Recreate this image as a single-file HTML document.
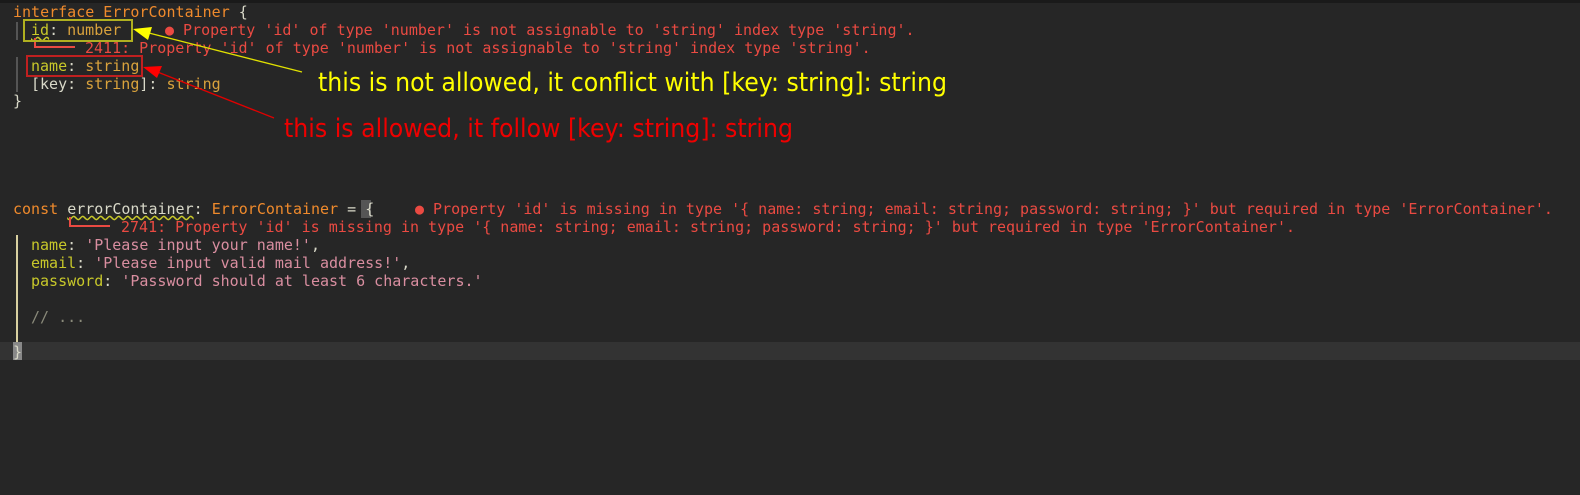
<!DOCTYPE html>
<html><head><style>
body{margin:0;width:1580px;height:495px;background:#262626;overflow:hidden;position:relative;font-family:"DejaVu Sans Mono","Liberation Mono",monospace;font-size:15px}
.l{position:absolute;white-space:pre;line-height:18px;height:18px}
.k{color:#ef8a2c}.p{color:#c8c82a}.t{color:#d9a23c}.s{color:#d98ea0}.w{color:#d8d8c8}.e{color:#ea4a42}.c{color:#8a8a7a}
</style></head><body>
<div style="position:absolute;left:0;top:0;width:1580px;height:3px;background:#1a1a1a"></div>
<div style="position:absolute;left:0;top:342px;width:1580px;height:18px;background:#333"></div>
<div style="position:absolute;left:16px;top:22px;width:2px;height:18px;background:#555"></div>
<div style="position:absolute;left:16px;top:57px;width:2px;height:35px;background:#555"></div>
<div style="position:absolute;left:16px;top:235px;width:2px;height:108px;background:#d8d0a0"></div>
<div style="position:absolute;left:361px;top:200px;width:10px;height:18px;background:#555"></div>
<div style="position:absolute;left:13px;top:342px;width:9px;height:18px;background:#888"></div>

<div class="l" style="left:13px;top:3px"><span class="k">interface ErrorContainer</span> <span class="w">{</span></div>
<div class="l" style="left:31px;top:21px"><span class="p" style="text-decoration:underline wavy #c8c82a">id</span><span class="w">:</span> <span class="t">number</span></div>
<div class="l e" style="left:165px;top:21px">● Property 'id' of type 'number' is not assignable to 'string' index type 'string'.</div>
<div class="l e" style="left:85px;top:39px">2411: Property 'id' of type 'number' is not assignable to 'string' index type 'string'.</div>
<div class="l" style="left:31px;top:57px"><span class="p">name</span><span class="w">:</span> <span class="t">string</span></div>
<div class="l" style="left:31px;top:75px"><span class="w">[key:</span> <span class="t">string</span><span class="w">]:</span> <span class="t">string</span></div>
<div class="l w" style="left:13px;top:92px">}</div>

<div class="l" style="left:13px;top:200px"><span class="k">const</span> <span class="w" style="text-decoration:underline wavy #c8c82a">errorContainer</span><span class="w">:</span> <span class="k">ErrorContainer</span> <span class="w">= {</span></div>
<div class="l e" style="left:415px;top:200px">● Property 'id' is missing in type '{ name: string; email: string; password: string; }' but required in type 'ErrorContainer'.</div>
<div class="l e" style="left:121px;top:218px">2741: Property 'id' is missing in type '{ name: string; email: string; password: string; }' but required in type 'ErrorContainer'.</div>
<div class="l" style="left:31px;top:236px"><span class="p">name</span><span class="w">:</span> <span class="s">'Please input your name!'</span><span class="w">,</span></div>
<div class="l" style="left:31px;top:254px"><span class="p">email</span><span class="w">:</span> <span class="s">'Please input valid mail address!'</span><span class="w">,</span></div>
<div class="l" style="left:31px;top:272px"><span class="p">password</span><span class="w">:</span> <span class="s">'Password should at least 6 characters.'</span></div>
<div class="l c" style="left:31px;top:308px">// ...</div>
<div class="l w" style="left:13px;top:343px">}</div>

<svg width="1580" height="495" style="position:absolute;left:0;top:0">
<path d="M35 38V47H75" stroke="#ea4a42" stroke-width="2" fill="none"/>
<path d="M70 217V226H110" stroke="#ea4a42" stroke-width="2" fill="none"/>
<rect x="24" y="20" width="108" height="21" fill="none" stroke="#b0b020" stroke-width="2"/>
<rect x="27" y="56" width="115" height="20" fill="none" stroke="#c02020" stroke-width="2"/>
<line x1="302" y1="72" x2="145" y2="32" stroke="#e0e000" stroke-width="1.3"/>
<polygon points="133,29 152,27 148,40" fill="#ffff00"/>
<line x1="274" y1="118" x2="155" y2="71" stroke="#e00000" stroke-width="1.3"/>
<polygon points="143,67 162,66 157,78" fill="#ff0000"/>
<text x="318" y="91" fill="#ffff00" font-family="DejaVu Sans,sans-serif" font-size="26" textLength="629" lengthAdjust="spacingAndGlyphs">this is not allowed, it conflict with [key: string]: string</text>
<text x="284" y="137" fill="#ee0000" font-family="DejaVu Sans,sans-serif" font-size="26" textLength="509" lengthAdjust="spacingAndGlyphs">this is allowed, it follow [key: string]: string</text>
</svg>
</body></html>
